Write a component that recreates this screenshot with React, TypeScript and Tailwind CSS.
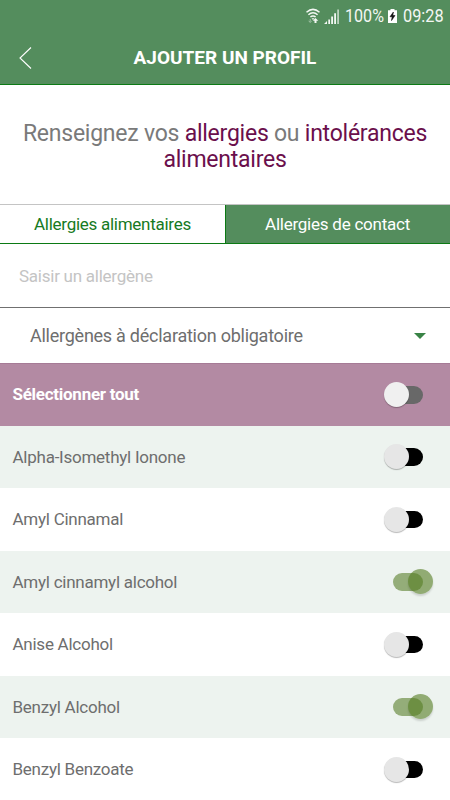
import { useState } from "react";
import clsx from "clsx";

type ToggleProps = {
  label: string;
  checked: boolean;
  faded?: boolean;
  onChange: () => void;
};

const initialAllergens = [
  { name: "Alpha-Isomethyl Ionone", selected: false },
  { name: "Amyl Cinnamal", selected: false },
  { name: "Amyl cinnamyl alcohol", selected: true },
  { name: "Anise Alcohol", selected: false },
  { name: "Benzyl Alcohol", selected: true },
  { name: "Benzyl Benzoate", selected: false },
];

function Toggle({ label, checked, faded, onChange }: ToggleProps) {
  return (
    <button
      role="switch"
      aria-checked={checked}
      aria-label={label}
      onClick={onChange}
      className={clsx(
        "relative mr-[27px] h-[17.5px] w-[30px] shrink-0 rounded-full",
        checked ? "bg-[#94ad79]" : faded ? "bg-[#686868]" : "bg-black"
      )}
    >
      <span
        className={clsx(
          "absolute -top-[4px] size-[25px] rounded-full",
          checked
            ? "left-[15px] bg-[#547b20]/60 shadow-[0_2px_2px_rgba(0,0,0,0.14)]"
            : "-left-[9.5px] shadow-[0_1px_1px_rgba(0,0,0,0.28)]",
          !checked && (faded ? "bg-[#f0f0f0]" : "bg-[#e6e6e6]")
        )}
      />
    </button>
  );
}

function StatusBar() {
  return (
    <div className="flex h-8 items-center justify-end pr-[6px] text-[#f3f7f3]">
      <svg width="14" height="16" viewBox="0 0 14 16" fill="none" stroke="currentColor" strokeWidth="1.5" className="mr-[4px]">
        <path d="M0.5 4.2Q7-1.4 13.5 4.2M2.4 6.7Q7 2.7 11.6 6.7M4.4 9Q7 6.9 9.6 9" />
        <path d="M5.5 10.2h3L7 12z" fill="currentColor" stroke="none" />
        <path d="M4.2 11v2.4M2.7 12.8l1.5 1.7 1.5-1.7" strokeWidth="0.8" opacity="0.6" />
        <path d="M9.5 10l2.8 2.8h-1.8v2.2H8.5v-2.2H6.8z" fill="currentColor" stroke="none" />
      </svg>
      <svg width="15" height="15" viewBox="0 0 15 15" fill="currentColor" className="mr-[6px]">
        <path d="M0 15l3-3v3zM4.3 10.5H6V15H4.3zM7.2 7.5H9V15H7.2zM10.2 4.2H12V15h-1.8z" />
        <path d="M13.2 0.5H15V15h-1.8z" opacity="0.65" />
      </svg>
      <span className="w-[40px] origin-left scale-x-[0.87] whitespace-nowrap text-[18.5px] leading-8">100%</span>
      <svg width="9" height="14" viewBox="0 0 9 14" className="mr-[6px] ml-[3px]">
        <path d="M2.5 0h4v1.2H9V14H0V1.2h2.5z" fill="#fff" />
        <path d="M5.4 3L2 7.7h2.2L3.5 11.6 7 6.5H4.8z" fill="#111" stroke="#111" strokeWidth="0.6" />
      </svg>
      <span className="w-[41px] origin-left scale-x-[0.88] whitespace-nowrap text-[18.5px] leading-8">09:28</span>
    </div>
  );
}

export default function App() {
  const [allergens, setAllergens] = useState(initialAllergens);
  const [tab, setTab] = useState("contact");
  const allSelected = allergens.every((item) => item.selected);

  const toggleAll = () => setAllergens(allergens.map((item) => ({ ...item, selected: !allSelected })));
  const toggleOne = (name: string) =>
    setAllergens(allergens.map((item) => (item.name === name ? { ...item, selected: !item.selected } : item)));

  return (
    <main className="h-[800px] w-[450px] overflow-hidden bg-white font-[Roboto,sans-serif] text-[#6e6e6e]">
      <header className="h-[85px] border-b border-[#0b7a14] bg-[#548d5d]">
        <StatusBar />
        <div className="grid h-[52px] grid-cols-[50px_1fr_50px] items-center">
          <button aria-label="Retour" className="pl-[19px] text-white">
            <svg width="13" height="22" viewBox="0 0 13 22" fill="none" stroke="currentColor" strokeWidth="1.1">
              <path d="M12 0.5L1 11l11 10.5" />
            </svg>
          </button>
          <h1 className="text-center text-[19px] font-bold text-white">AJOUTER UN PROFIL</h1>
        </div>
      </header>

      <section className="h-[120px] border-b border-[#c4c4c4] pt-[36px] text-center text-[23px] leading-[26px] tracking-[-0.24px] text-[#7a7a7a]">
        <p>
          Renseignez vos <span className="text-[#6b0f4c]">allergies</span> ou{" "}
          <span className="text-[#6b0f4c]">
            intolérances
            <br />
            alimentaires
          </span>
        </p>
      </section>

      <nav className="flex h-[39px] border-b border-[#0b7a14] text-[17px] tracking-[-0.27px]">
        <button
          onClick={() => setTab("food")}
          className={clsx("w-[225px] pt-[2px]", tab === "food" ? "bg-[#548d5d] text-white" : "bg-white text-[#167a22]")}
        >
          Allergies alimentaires
        </button>
        <button
          onClick={() => setTab("contact")}
          className={clsx(
            "w-[225px] border-l border-[#0b7a14] pt-[2px] pr-[1px] tracking-[-0.24px]",
            tab === "contact" ? "bg-[#548d5d] text-white" : "bg-white text-[#167a22]"
          )}
        >
          Allergies de contact
        </button>
      </nav>

      <input
        type="text"
        placeholder="Saisir un allergène"
        className="block h-16 w-full border-b border-[#707070] pl-[19px] text-[17px] tracking-[-0.25px] outline-none placeholder:text-[#c4c4c4]"
      />

      <button className="flex h-[55px] w-full items-center justify-between pr-[24px] pl-[30px] text-[18px] tracking-[-0.25px]">
        Allergènes à déclaration obligatoire
        <svg width="12" height="6" viewBox="0 0 12 6">
          <path d="M0 0h12L6 6z" fill="#398346" />
        </svg>
      </button>

      <div className="flex h-[62.5px] items-center justify-between border-t border-[#a67b96] bg-[#b38aa3] pl-[12.5px] text-[17px] font-bold tracking-[-0.27px] text-white">
        Sélectionner tout
        <Toggle label="Sélectionner tout" checked={allSelected} faded onChange={toggleAll} />
      </div>
      <ul>
        {allergens.map((item) => (
          <li
            key={item.name}
            className="flex h-[62.5px] items-center justify-between pl-[12.5px] text-[17px] tracking-[-0.25px] odd:bg-[#edf3ef]"
          >
            <span className="pt-[1px]">{item.name}</span>
            <Toggle label={item.name} checked={item.selected} onChange={() => toggleOne(item.name)} />
          </li>
        ))}
      </ul>
    </main>
  );
}
